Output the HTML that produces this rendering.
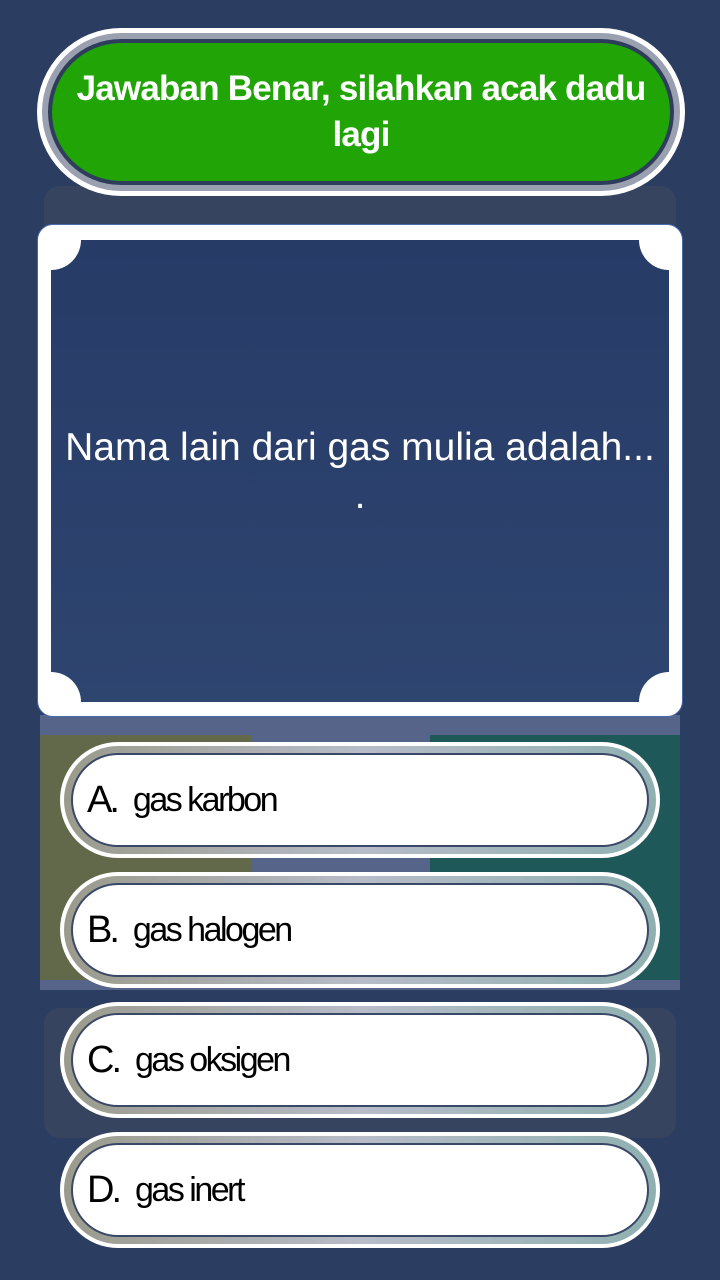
<!DOCTYPE html>
<html><head><style>
body{margin:0;width:720px;height:1280px;background:#2c3d62;position:relative;overflow:hidden;font-family:"Liberation Sans",sans-serif}
.a{position:absolute}
.pill{position:absolute;left:60px;width:600px;height:116px;border-radius:58px;background:#fff;box-sizing:border-box;padding:4px}
.pill .r{width:100%;height:100%;border-radius:54px;background:linear-gradient(90deg,#9a9a8c,#b7bcc8 50%,#8fb0b0);padding:7px;box-sizing:border-box}
.pill .i{width:100%;height:100%;border-radius:48px;background:#fff;border:2px solid #3a4868;box-sizing:border-box;display:flex;align-items:center;padding-left:14px;color:#000;font-size:34px;letter-spacing:-2.5px}
.pill .i b{font-weight:normal;font-size:38px;margin-right:16px;letter-spacing:-3px}
</style></head><body>
<div class="a" style="left:40px;top:715px;width:640px;height:275px;background:#56648a"></div>
<div class="a" style="left:40px;top:735px;width:212px;height:245px;background:#62684a"></div>
<div class="a" style="left:430px;top:735px;width:250px;height:245px;background:#1f5858"></div>
<div class="a" style="left:44px;top:1008px;width:632px;height:130px;border-radius:16px;background:#364460"></div>
<div class="a" style="left:44px;top:186px;width:632px;height:60px;border-radius:16px;background:#364460"></div>

<div class="a" style="left:37px;top:28px;width:648px;height:168px;border-radius:84px;background:#fff;padding:5px;box-sizing:border-box">
 <div style="width:100%;height:100%;border-radius:80px;background:#9aa0b0;padding:6px;box-sizing:border-box">
  <div style="width:100%;height:100%;border-radius:74px;background:#2f3d5c;padding:4px;box-sizing:border-box">
   <div style="width:100%;height:100%;border-radius:70px;background:#21a405;display:flex;align-items:center;justify-content:center;text-align:center;color:#fff;font-weight:bold;font-size:35px;line-height:46px;letter-spacing:-0.8px;padding:0 4px;box-sizing:border-box;white-space:nowrap">Jawaban Benar, silahkan acak dadu<br>lagi</div>
  </div>
 </div>
</div>

<div class="a" style="left:37px;top:224px;width:646px;height:493px;border-radius:16px;background:#fff;border:1px solid #4a6ab0;box-sizing:border-box"></div>
<div class="a" style="left:51px;top:240px;width:618px;height:462px;background:linear-gradient(#273b67,#2e4570);overflow:hidden">
 <div class="a" style="left:-30px;top:-30px;width:60px;height:60px;border-radius:50%;background:#fff"></div>
 <div class="a" style="right:-30px;top:-30px;width:60px;height:60px;border-radius:50%;background:#fff"></div>
 <div class="a" style="left:-30px;bottom:-30px;width:60px;height:60px;border-radius:50%;background:#fff"></div>
 <div class="a" style="right:-30px;bottom:-30px;width:60px;height:60px;border-radius:50%;background:#fff"></div>
 <div class="a" style="left:-20px;right:-20px;top:184px;text-align:center;color:#fff;font-size:39px;line-height:48px;white-space:nowrap">Nama lain dari gas mulia adalah...<br>.</div>
</div>

<div class="pill" style="top:742px"><div class="r"><div class="i"><b>A.</b>gas karbon</div></div></div>
<div class="pill" style="top:872px"><div class="r"><div class="i"><b>B.</b>gas halogen</div></div></div>
<div class="pill" style="top:1002px"><div class="r"><div class="i"><b>C.</b>gas oksigen</div></div></div>
<div class="pill" style="top:1132px"><div class="r"><div class="i"><b>D.</b>gas inert</div></div></div>
</body></html>
